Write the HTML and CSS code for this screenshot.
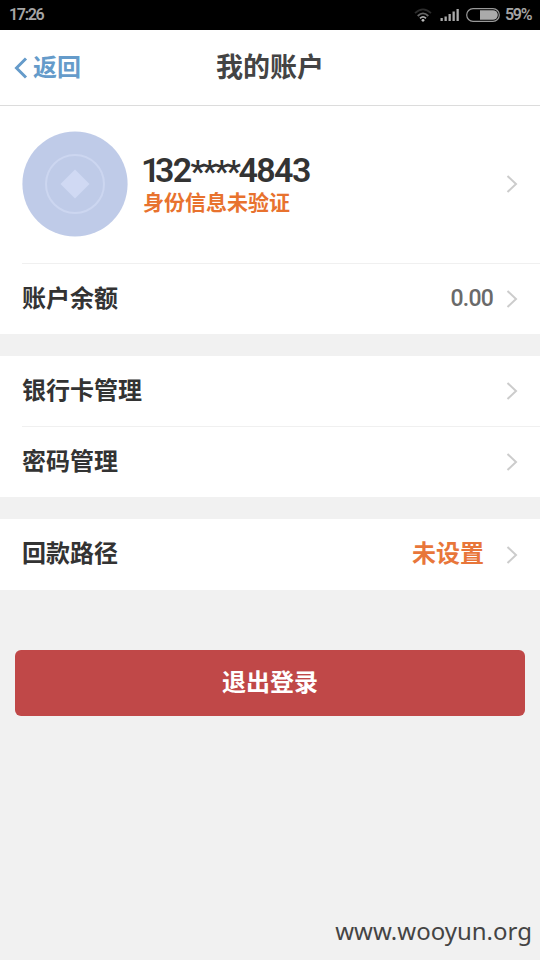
FILE: index.html
```html
<!DOCTYPE html>
<html lang="zh-CN">
<head>
<meta charset="utf-8">
<title>我的账户</title>
<link rel="stylesheet" href="styles.css">
</head>
<body>
<div class="status">
  <span class="time">17:26</span>
  <svg class="wifi" width="18" height="14" viewBox="0 0 18 14" fill="none">
    <path d="M1 5.2Q9-2.6 17 5.2" stroke="#2c2c2c" stroke-width="1.7"/>
    <path d="M3.7 8Q9 2.8 14.3 8" stroke="#666" stroke-width="1.8"/>
    <path d="M6 10.3Q9 7.4 12 10.3" stroke="#aaa" stroke-width="1.8"/>
    <circle cx="9" cy="12.3" r="1.4" fill="#bbb"/>
  </svg>
  <svg class="signal" width="20" height="14" viewBox="0 0 20 14" fill="#aaa">
    <path d="M.5 10h2.3v3H.5zM4.500 8.500h2.300v4.500h-2.300zM8.500 6h2.300v7h-2.300zM12.500 3.500h2.300v9.500h-2.300zM16.500 1h2.300v12h-2.300z"/>
  </svg>
  <svg class="battery" width="34" height="14" viewBox="0 0 34 14">
    <rect x=".7" y=".7" width="32.600" height="12.600" rx="6.300" fill="none" stroke="#999" stroke-width="1.200"/>
    <path d="M14 2.200h13a4.800 4.800 0 0 1 0 9.600H14z" fill="#aaa"/>
  </svg>
  <span class="percent">59%</span>
</div>
<header class="header">
  <a class="back"><svg width="14" height="22" viewBox="0 0 14 22" fill="none" stroke="#659bca" stroke-width="3"><path d="M12 1.500L2.500 11L12 20.500"/></svg><span>返回</span></a>
  <h1 class="title">我的账户</h1>
</header>
<main>
  <section class="group">
    <div class="profile">
      <svg class="avatar" width="106" height="106" viewBox="0 0 106 106">
        <circle cx="53" cy="53" r="52.600" fill="#bfcbe8"/>
        <circle cx="53" cy="53" r="29" fill="none" stroke="#ccd6f0" stroke-width="2"/>
        <path d="M53 38.500L67.500 53L53 67.500L38.500 53z" fill="#d0d9f3"/>
      </svg>
      <div class="who">
        <div class="phone"><span class="one">1</span>32<span class="mask">****</span>4843</div>
        <div class="verify">身份信息未验证</div>
      </div>
      <svg class="arrow" width="12" height="18" viewBox="0 0 12 18"><path d="M1.500 1L10 9L1.500 17"/></svg>
    </div>
    <div class="row divided">
      <span class="label">账户余额</span><span class="amount">0.00</span>
      <svg class="arrow" width="12" height="18" viewBox="0 0 12 18"><path d="M1.500 1L10 9L1.500 17"/></svg>
    </div>
  </section>
  <section class="group">
    <div class="row short">
      <span class="label">银行卡管理</span>
      <svg class="arrow" width="12" height="18" viewBox="0 0 12 18"><path d="M1.500 1L10 9L1.500 17"/></svg>
    </div>
    <div class="row divided">
      <span class="label">密码管理</span>
      <svg class="arrow" width="12" height="18" viewBox="0 0 12 18"><path d="M1.500 1L10 9L1.500 17"/></svg>
    </div>
  </section>
  <section class="group">
    <div class="row">
      <span class="label">回款路径</span><span class="unset">未设置</span>
      <svg class="arrow" width="12" height="18" viewBox="0 0 12 18"><path d="M1.500 1L10 9L1.500 17"/></svg>
    </div>
  </section>
  <button class="logout">退出登录</button>
</main>
<footer class="watermark">www.wooyun.org</footer>
</body>
</html>
```
FILE: styles.css
```css
* { box-sizing: border-box; }
body {
  margin: 0;
  height: 960px;
  display: flex;
  flex-direction: column;
  background: #f1f1f1;
  color: #333;
  font-family: Roboto, "Noto Sans CJK SC", sans-serif;
  overflow: hidden;
}
svg { flex: none; display: block; }
.status {
  height: 30px;
  flex: none;
  display: flex;
  align-items: center;
  padding: 0 9px 0 9px;
  background: #000;
  color: #a5a5a5;
  font-size: 16px;
  font-weight: 600;
  line-height: 28px;
}
.time { margin-right: auto; letter-spacing: -1.3px; padding-bottom: 1px; }
.signal { margin-left: 8px; }
.battery { margin-left: 6px; }
.percent { margin-left: 5px; width: 26px; letter-spacing: -1.3px; padding-bottom: 1px; }
.header {
  height: 76px;
  flex: none;
  display: grid;
  grid-template-columns: 1fr auto 1fr;
  align-items: center;
  padding: 0 14px;
  background: #fff;
  border-bottom: 1px solid #dcdcdc;
}
.back {
  display: flex;
  align-items: center;
  gap: 5px;
  color: #659bca;
  font-size: 24px;
  font-weight: 700;
  line-height: 36px;
}
.title {
  margin: 0;
  font-size: 27px;
  font-weight: 700;
  line-height: 40px;
  color: #444;
}
.group { background: #fff; margin-bottom: 22px; }
.profile {
  height: 157px;
  display: flex;
  align-items: center;
  padding: 0 22px 2px;
}
.who { flex: 1; margin-left: 14px; padding-top: 3px; }
.phone { margin-left: -1px; font-size: 34px; font-weight: 600; line-height: 34px; letter-spacing: -1.6px; }
.one { letter-spacing: -5.5px; }
.mask { font-size: 32px; letter-spacing: -2.4px; }
.verify { margin-left: 1px; color: #e8722e; font-size: 21px; font-weight: 700; line-height: 30px; }
.row {
  height: 71px;
  display: flex;
  align-items: center;
  margin-left: 22px;
  padding-right: 22px;
}
.short { height: 70px; }
.divided { border-top: 1px solid #f0f0f0; }
.label { margin-right: auto; font-size: 24px; font-weight: 700; line-height: 36px; margin-top: -1px; }
.amount { font-size: 23px; letter-spacing: -0.8px; font-weight: 500; color: #6a6a6a; margin-right: 13px; margin-top: -1px; }
.unset { font-size: 24px; font-weight: 700; line-height: 36px; color: #e8763a; margin-right: 22px; margin-top: -1px; }
.arrow { fill: none; stroke: #ccc; stroke-width: 2; }
.logout {
  display: block;
  width: 510px;
  height: 66px;
  margin: 60px auto 0;
  padding: 0 0 6px;
  border: 0;
  border-radius: 6px;
  background: #c04848;
  color: #fff;
  font: 700 24px "Noto Sans CJK SC", sans-serif;
}
.group:last-of-type { margin-bottom: 0; }
.watermark {
  margin-top: auto;
  padding: 0 8px 12px 0;
  text-align: right;
  font-family: "Noto Sans", sans-serif;
  font-size: 24px;
  line-height: 34px;
  color: #444;
}
```
